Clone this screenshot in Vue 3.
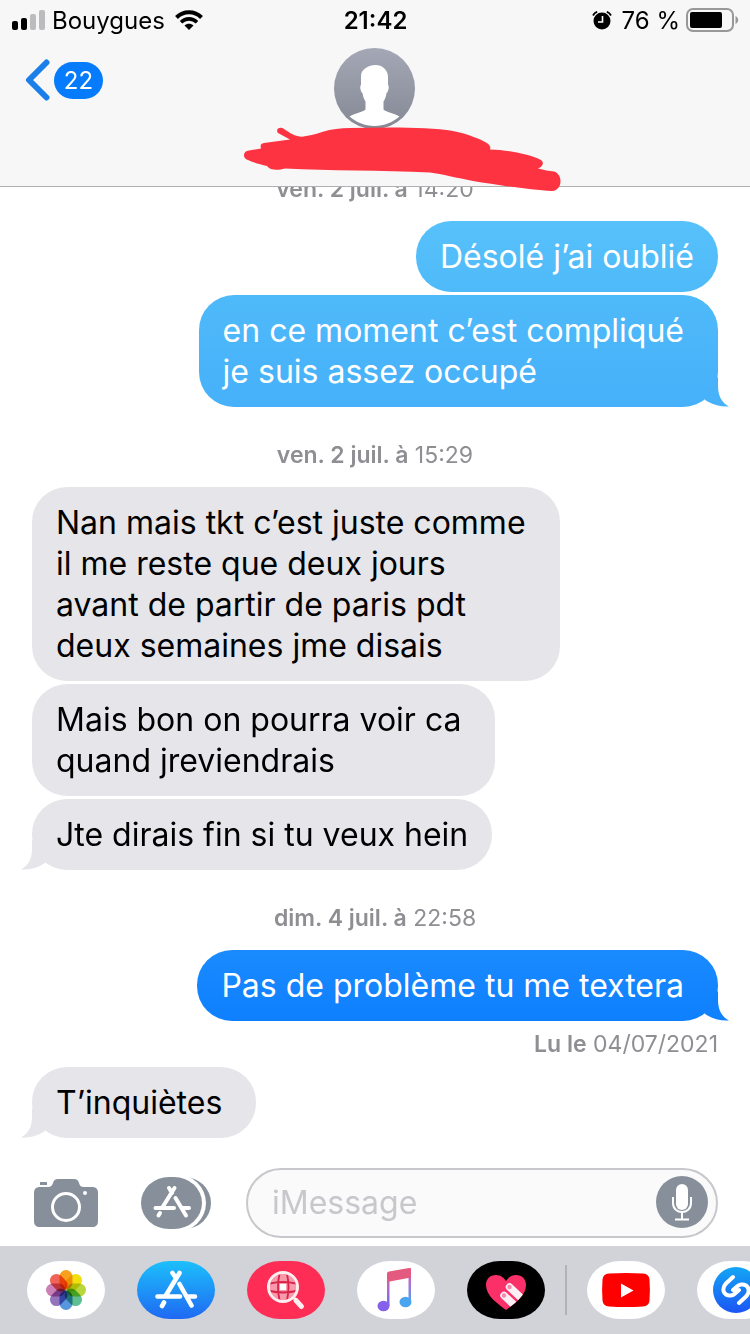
<script setup>
import { ref } from 'vue'

const draft = ref('')

const thread = [
  { type: 'stamp', day: 'ven. 2 juil. à', time: '14:20' },
  { type: 'sent', tone: 'light', lines: ['Désolé j’ai oublié'] },
  { type: 'sent', tone: 'sky', tail: true, wide: true, lines: ['en ce moment c’est compliqué', 'je suis assez occupé'] },
  { type: 'stamp', day: 'ven. 2 juil. à', time: '15:29' },
  {
    type: 'received',
    wide: true,
    lines: [
      'Nan mais tkt c’est juste comme',
      'il me reste que deux jours',
      'avant de partir de paris pdt',
      'deux semaines jme disais',
    ],
  },
  { type: 'received', wide: true, lines: ['Mais bon on pourra voir ca', 'quand jreviendrais'] },
  { type: 'received', tail: true, lines: ['Jte dirais fin si tu veux hein'] },
  { type: 'stamp', day: 'dim. 4 juil. à', time: '22:58' },
  { type: 'sent', tone: 'deep', tail: true, wide: true, lines: ['Pas de problème tu me textera'] },
  { type: 'receipt', day: 'Lu le', time: '04/07/2021' },
  { type: 'received', tail: true, wide: true, lines: ['T’inquiètes'] },
]

const petals = ['#f9a11f', '#f2df10', '#b9d63c', '#5fbf93', '#5596dc', '#9474bd', '#cb80b6', '#ef6358']
</script>

<template>
  <div class="screen">
    <header class="top">
      <div class="status">
        <div class="status-side">
          <svg class="signal" width="34" height="20" viewBox="0 0 34 20" aria-hidden="true">
            <rect x="0" y="11" width="6" height="9" rx="2" />
            <rect x="9" y="8" width="6" height="12" rx="2" />
            <rect x="18" y="4" width="6" height="16" rx="2" fill="#bcbcbe" />
            <rect x="27" y="0" width="6" height="20" rx="2" fill="#bcbcbe" />
          </svg>
          <span>Bouygues</span>
          <svg class="wifi" width="28" height="20" viewBox="0 0 28 20" fill="none" stroke="#000" aria-hidden="true">
            <path d="M1.500 7.500C8.500.5 19.500.5 26.500 7.500" stroke-width="4" />
            <path d="M6 12.200c4.600-4.400 11.400-4.400 16 0" stroke-width="3.600" />
            <path d="M14 20l-4.500-4.600c2.600-2.200 6.400-2.200 9 0z" fill="#000" stroke="none" />
          </svg>
        </div>
        <span class="clock">21:42</span>
        <div class="status-side end">
          <svg class="alarm" width="20" height="19" viewBox="0 0 20 19" aria-hidden="true">
            <circle cx="10" cy="10" r="8.500" />
            <path d="M1 4.500C2 2.500 3.500 1.200 5.200.8M19 4.500C18 2.500 16.500 1.200 14.800.8" fill="none" stroke="#000" stroke-width="1.800" />
            <path d="M10.500 5v6H6" fill="none" stroke="#fff" stroke-width="1.600" />
          </svg>
          <span>76 %</span>
          <svg class="battery" width="53" height="24" viewBox="0 0 53 24" aria-hidden="true">
            <rect x="1" y="1" width="46" height="22" rx="6" fill="none" stroke="#98989a" stroke-width="2" />
            <rect x="4" y="4" width="32" height="16" rx="2" />
            <path d="M49.500 8c3.600 1.500 3.600 6.500 0 8z" fill="#98989a" />
          </svg>
        </div>
      </div>
      <nav class="nav">
        <button class="back" type="button" aria-label="Retour, 22 messages">
          <svg width="25" height="42" viewBox="0 0 25 42" fill="none" stroke="#1a7fe8" stroke-width="6" stroke-linecap="round" stroke-linejoin="round" aria-hidden="true">
            <path d="M21.500 3.500L4 21l17.500 17.500" />
          </svg>
          <span class="count">22</span>
        </button>
        <button class="avatar" type="button" aria-label="Contact">
          <svg width="81" height="81" viewBox="0 0 81 81" aria-hidden="true">
            <defs>
              <linearGradient id="avatarFill" x1="0" y1="0" x2="0" y2="1">
                <stop offset="0" stop-color="#a4a8b6" />
                <stop offset="1" stop-color="#858994" />
              </linearGradient>
            </defs>
            <circle cx="40.500" cy="40.500" r="40.500" fill="url(#avatarFill)" />
            <path fill="#fff" d="M41 17c6-.5 13 4 13 12v8c1.500 1 .5 7-1.500 8-.5 4-1.500 6-3 8.500v8c3 3 10 3.500 16 7C59 74 50.500 78 40.500 78S22 74 15.500 68.500c6-3.500 13-4 16-7v-8c-1.500-2.500-2.500-4.500-3-8.500-2-1-3-7-1.500-8v-9c0-7 8-11 14-11z" />
          </svg>
        </button>
      </nav>
      <svg class="scribble" width="325" height="70" viewBox="0 0 325 70" fill="#fe3341" aria-hidden="true">
        <path d="M8 35C2 33 3 26 9 25.500L21 23.500C20 20 21 18.500 24 18L50 14.500L38 8C35 4 40 1 44 4C50 8 55 11.500 62 11.700C70 10.500 76 9 82 7C92 4 100 3 110 3L150 2.500C175 2.700 197 3 213 6C228 9 240 14 247 18C251 21 250.500 23 250 24.500C268 25 288 29 300 34.500C305 37 303 42 298 43.500C304 45 309 46 314 46.500C323 49 323 65 312 66C290 65 258 60 233 56C217 53 202 49 190 47.500C140 45 90 46 45 43.500C37 46 30 45 27 41C20 39 14 38 8 35Z" />
      </svg>
    </header>

    <main class="thread">
      <template v-for="(item, i) in thread" :key="i">
        <p v-if="item.type === 'stamp'" class="meta stamp"><b>{{ item.day }}</b> {{ item.time }}</p>
        <p v-else-if="item.type === 'receipt'" class="meta receipt"><b>{{ item.day }}</b> {{ item.time }}</p>
        <div v-else class="bubble" :class="[item.type, item.tone, { wide: item.wide }]">
          <span v-for="line in item.lines" :key="line" class="line">{{ line }}</span>
          <svg v-if="item.tail" class="tail" width="28" height="36" viewBox="0 0 28 36" aria-hidden="true">
            <path d="M17 6V15C17 25 21 32 28 35.500C19 36 10 33.500 3.500 28.500L10 19L15 8Z" />
          </svg>
        </div>
      </template>
    </main>

    <form class="composer" @submit.prevent>
      <button class="tool" type="button" aria-label="Appareil photo">
        <svg width="64" height="52" viewBox="0 0 64 52" aria-hidden="true">
          <path fill="#87909a" d="M6 10h8c3 0 4-1.500 5-4 1-3 2-4 5-4h16c3 0 4 1 5 4s2 4 5 4h8c4 0 6 2 6 6v28c0 4-2 6-6 6H6c-4 0-6-2-6-6V16c0-4 2-6 6-6z" />
          <rect x="6" y="5" width="7" height="3" fill="#87909a" />
          <circle cx="32" cy="30" r="13.500" fill="none" stroke="#fff" stroke-width="3" />
          <circle cx="51" cy="16" r="2" fill="#fff" />
        </svg>
      </button>
      <button class="tool" type="button" aria-label="Apps">
        <svg width="70" height="52" viewBox="0 0 70 52" aria-hidden="true">
          <rect x="8" width="62" height="52" rx="27" ry="26" fill="#87909a" />
          <rect x="-3" y="-3" width="68" height="58" rx="30" ry="29" fill="#fff" />
          <rect width="61" height="52" rx="28" ry="26" fill="#87909a" />
          <path d="M33.500 11L21 31M28 11l3 5M34.500 21L45 38.500M14.500 31H33M42 31h6M19 36l-1.500 2.500" fill="none" stroke="#fff" stroke-width="4" stroke-linecap="round" />
        </svg>
      </button>
      <div class="field">
        <input v-model="draft" type="text" placeholder="iMessage" aria-label="iMessage" />
        <button class="mic" type="button" aria-label="Message audio">
          <svg width="52" height="52" viewBox="0 0 52 52" aria-hidden="true">
            <circle cx="26" cy="26" r="26" fill="#87909a" />
            <rect x="20" y="8" width="12" height="26" rx="6" fill="#fff" />
            <path d="M17 21v6c0 12 18 12 18 0v-6M26 36.500V43M19 43.500h14" fill="none" stroke="#fff" stroke-width="2" />
          </svg>
        </button>
      </div>
    </form>

    <footer class="apps">
      <button class="app white" type="button" aria-label="Photos">
        <svg width="78" height="58" viewBox="0 0 78 58" aria-hidden="true">
          <rect v-for="(c, i) in petals" :key="c" class="petal" x="32.500" y="9" width="13" height="19.500" rx="6.500" :fill="c" :transform="`rotate(${i * 45} 39 29)`" />
        </svg>
      </button>
      <button class="app store" type="button" aria-label="App Store">
        <svg width="78" height="58" viewBox="0 0 78 58" aria-hidden="true">
          <path d="M42.500 12L28.500 35M35.500 12l3.500 5M42.500 23L54.500 44.500M20.500 35.500H43M52 35.500h6M27 41.500L25 45" fill="none" stroke="#fff" stroke-width="4.600" stroke-linecap="round" />
        </svg>
      </button>
      <button class="app red" type="button" aria-label="Images">
        <svg width="78" height="58" viewBox="0 0 78 58" aria-hidden="true">
          <circle cx="36" cy="26" r="13" fill="#f99aac" />
          <rect x="33" y="23" width="6" height="6" fill="#fff" />
          <path d="M32.500 13Q29.500 26 32.500 39M40 13q3 13 0 26M23 22.500q13-3 26 0M23 30q13 3 26 0" fill="none" stroke="#d92348" stroke-width="1.800" />
          <circle cx="36" cy="26" r="14.500" fill="none" stroke="#fdeef0" stroke-width="3" />
          <path d="M47 37l2 2" stroke="#fdeef0" stroke-width="3" />
          <path d="M49 39.500l5.500 6" stroke="#fdeef0" stroke-width="5" stroke-linecap="round" />
        </svg>
      </button>
      <button class="app white" type="button" aria-label="Musique">
        <svg width="78" height="58" viewBox="0 0 78 58" aria-hidden="true">
          <defs>
            <linearGradient id="noteStem" x1="0" y1="0" x2="0" y2="1">
              <stop offset="0" stop-color="#f0557c" />
              <stop offset=".45" stop-color="#b469c8" />
              <stop offset="1" stop-color="#6b6cf0" />
            </linearGradient>
            <linearGradient id="noteStemBlue" x1="0" y1="0" x2="0" y2="1">
              <stop offset="0" stop-color="#e85c86" />
              <stop offset=".5" stop-color="#a574d8" />
              <stop offset="1" stop-color="#4aa4f0" />
            </linearGradient>
          </defs>
          <path d="M30 13q0-2 2.500-2.300v34.300h-2.500z" fill="url(#noteStem)" />
          <path d="M51.500 8l2.500-1v34h-2.500z" fill="url(#noteStemBlue)" />
          <path d="M30 13q0-2 2-2.400L52 7q2-.3 2 1.500v8L30 21z" fill="#e4597f" />
          <ellipse cx="26.500" cy="45" rx="6" ry="5.200" fill="#8560ea" />
          <ellipse cx="48.500" cy="41" rx="6" ry="5.200" fill="#4aa4f0" />
        </svg>
      </button>
      <button class="app black" type="button" aria-label="Digital Touch">
        <svg width="78" height="58" viewBox="0 0 78 58" aria-hidden="true">
          <defs>
            <clipPath id="heartShape">
              <path d="M39 49C31 43 19 35 19 24c0-6 4-10 10-10 5 0 8 3 10 6 2-3 5-6 10-6 6 0 10 4 10 10 0 11-12 19-20 25z" />
            </clipPath>
          </defs>
          <g clip-path="url(#heartShape)">
            <path d="M10 5h60v50H10z" fill="#fc3068" />
            <path d="M42.500 26l17 16M37 34.500l16 15" stroke="#fdf0f5" stroke-width="7.500" stroke-linecap="round" />
            <circle cx="42.500" cy="26" r="2.200" fill="#f48aae" />
            <circle cx="37" cy="34.500" r="2.200" fill="#f48aae" />
          </g>
        </svg>
      </button>
      <span class="divider"></span>
      <button class="app white" type="button" aria-label="YouTube">
        <svg width="78" height="58" viewBox="0 0 78 58" aria-hidden="true">
          <path d="M22 12.500q17-1 34 0 6 .5 6.500 6 .8 10.500 0 21-.5 5.500-6.500 6-17 1-34 0-6-.5-6.500-6-.8-10.500 0-21 .5-5.500 6.500-6z" fill="#fe0000" />
          <path d="M34 22.500v14L46.500 29.500z" fill="#fff" />
        </svg>
      </button>
      <button class="app white" type="button" aria-label="Shazam">
        <svg width="78" height="58" viewBox="0 0 78 58" aria-hidden="true">
          <defs>
            <linearGradient id="shazamFill" x1="0" y1="0" x2="0" y2="1">
              <stop offset="0" stop-color="#12a6f5" />
              <stop offset="1" stop-color="#1c55f4" />
            </linearGradient>
          </defs>
          <circle cx="39" cy="29" r="23" fill="url(#shazamFill)" />
          <path d="M36 16l-7 6.500c-4 4-3 9 0 11s7 1 9-1l4-3.500M42 42l7-6.500c4-4 3-9 0-11s-7-1-9 1l-4 3.500" fill="none" stroke="#fff" stroke-width="4" stroke-linecap="round" />
        </svg>
      </button>
    </footer>
  </div>
</template>

<style>
body {
  margin: 0;
  background: #fff;
}
</style>

<style scoped>
.screen {
  display: flex;
  flex-direction: column;
  min-height: 100vh;
  overflow: hidden;
  color: #000;
  background: #fff;
  font-family: Inter, "Liberation Sans", sans-serif;
}

button {
  display: block;
  flex: none;
  margin: 0;
  padding: 0;
  border: 0;
  background: none;
  font: inherit;
  cursor: pointer;
}

svg {
  display: block;
  flex: none;
}

.top {
  position: relative;
  z-index: 1;
  box-sizing: border-box;
  height: 187px;
  border-bottom: 1px solid #b0b0b2;
  background: #f7f7f8;
}

.status {
  display: grid;
  grid-template-columns: 1fr auto 1fr;
  align-items: center;
  height: 40px;
  padding: 0 11px 0 12px;
  font-size: 24px;
}

.status-side {
  display: flex;
  align-items: center;
  gap: 6px;
}

.end {
  justify-content: flex-end;
}

.wifi {
  margin-left: 4px;
}

.alarm {
  margin-right: 4px;
}

.clock {
  font-weight: 600;
}

.nav {
  display: grid;
  grid-template-columns: 1fr auto 1fr;
  padding: 8px 26px 0 25px;
}

.back {
  display: flex;
  align-items: center;
  align-self: start;
  justify-self: start;
  gap: 4px;
  margin-top: 11px;
}

.count {
  width: 49px;
  border-radius: 19px;
  color: #fff;
  background: #067bfb;
  font-size: 24px;
  line-height: 37px;
  text-align: center;
}

.scribble {
  position: absolute;
  top: 125px;
  left: calc(50% - 135px);
}

.thread {
  display: flex;
  flex: 1;
  flex-direction: column;
  gap: 3px;
  margin-top: -11px;
  padding: 0 32px 29px;
}

.meta {
  margin: 0;
  color: #8e8e93;
  font-size: 23px;
  line-height: 26px;
}

.meta b {
  font-weight: 600;
}

.stamp {
  margin: 32px 0 16px;
  text-align: center;
}

.stamp:first-child {
  margin-top: 0;
}

.receipt {
  align-self: flex-end;
  margin: 7px 0;
}

.bubble {
  position: relative;
  padding: 15px 24px;
  border-radius: 35px;
  font-size: 32px;
  line-height: 41px;
}

.wide {
  padding-right: 34px;
}

.line {
  display: block;
}

.sent {
  align-self: flex-end;
  color: #fff;
}

.received {
  align-self: flex-start;
  background: #e5e5ea;
}

.light {
  background: linear-gradient(#56c1fa, #4fbaf9);
}

.sky {
  background: linear-gradient(#4fbaf9, #46b0fa);
}

.deep {
  background: linear-gradient(#1a8afe, #0e80fe);
}

.tail {
  position: absolute;
  right: -11px;
  bottom: 0;
  fill: #e5e5ea;
}

.received .tail {
  right: auto;
  left: -11px;
  transform: scaleX(-1);
}

.sky .tail {
  fill: #47b1fa;
}

.deep .tail {
  fill: #1082fe;
}

.composer {
  display: flex;
  align-items: center;
  padding: 0 32px 8px 34px;
}

.tool {
  margin-right: 43px;
}

.tool + .field {
  margin-left: -8px;
}

.field {
  display: flex;
  flex: 1;
  align-items: center;
  box-sizing: border-box;
  min-width: 0;
  height: 70px;
  padding: 0 8px 2px 24px;
  border: 2px solid #c7c7cc;
  border-radius: 35px;
  background: #fafafa;
}

.field input {
  flex: 1;
  min-width: 0;
  padding: 0;
  border: 0;
  outline: 0;
  background: none;
  font: inherit;
  font-size: 32px;
}

.field input::placeholder {
  color: #c7c7cc;
  opacity: 1;
}

.apps {
  display: flex;
  gap: 32px;
  padding: 15px 0 15px 27px;
  overflow: hidden;
  background: #d1d3d9;
}

.app {
  width: 78px;
  height: 58px;
  overflow: hidden;
  border-radius: 33px / 29px;
}

.white {
  background: #fff;
}

.store {
  background: linear-gradient(#1cc0fb, #1f69f2);
}

.red {
  background: #fd2d55;
}

.black {
  background: #000;
}

.petal {
  mix-blend-mode: multiply;
}

.divider {
  flex: none;
  width: 2px;
  height: 50px;
  margin: 4px -12px;
  background: #b0b3b9;
}
</style>
